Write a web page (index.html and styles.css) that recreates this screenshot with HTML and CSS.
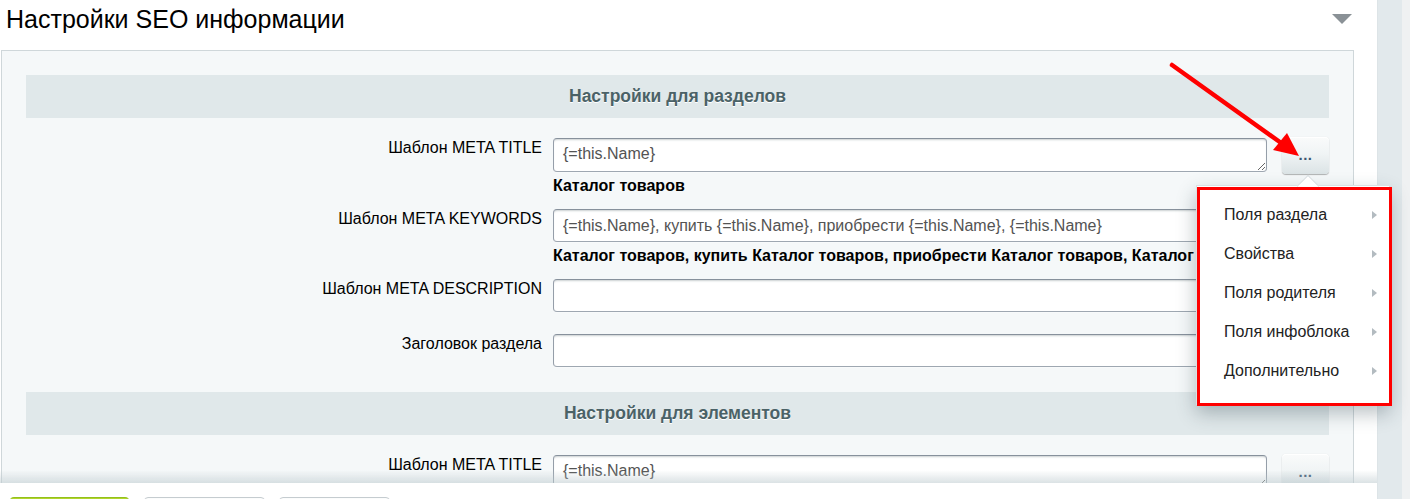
FILE: index.html
```html
<!DOCTYPE html>
<html lang="ru">
<head>
<meta charset="utf-8">
<title>Настройки SEO информации</title>
<link rel="stylesheet" href="styles.css">
</head>
<body>
<div class="layout">
  <div class="main">
    <div class="title-row">
      <h1 class="title">Настройки SEO информации</h1>
      <span class="toggle"></span>
    </div>
    <div class="panel">
      <div class="sec-head">Настройки для разделов</div>
      <div class="row row-first">
        <div class="lbl">Шаблон META TITLE</div>
        <div class="fld">
          <textarea class="inp inp-area">{=this.Name}</textarea>
          <div class="preview">Каталог товаров</div>
        </div>
        <button class="dots">...</button>
      </div>
      <div class="row">
        <div class="lbl">Шаблон META KEYWORDS</div>
        <div class="fld">
          <input class="inp" type="text" value="{=this.Name}, купить {=this.Name}, приобрести {=this.Name}, {=this.Name}">
          <div class="preview">Каталог товаров, купить Каталог товаров, приобрести Каталог товаров, Каталог товаров</div>
        </div>
        <button class="dots">...</button>
      </div>
      <div class="row">
        <div class="lbl">Шаблон META DESCRIPTION</div>
        <div class="fld">
          <input class="inp" type="text" value="">
        </div>
        <button class="dots">...</button>
      </div>
      <div class="row">
        <div class="lbl">Заголовок раздела</div>
        <div class="fld">
          <input class="inp" type="text" value="">
        </div>
        <button class="dots">...</button>
      </div>
      <div class="sec-head sec-head-2">Настройки для элементов</div>
      <div class="row row-first">
        <div class="lbl">Шаблон META TITLE</div>
        <div class="fld">
          <textarea class="inp inp-area">{=this.Name}</textarea>
          <div class="preview">Каталог товаров</div>
        </div>
        <button class="dots">...</button>
      </div>
    </div>
  </div>
  <div class="strip"></div>
  <div class="strip2"></div>
</div>

<div class="footer">
  <span class="fbtn fbtn-save"></span>
  <span class="fbtn fbtn-apply"></span>
  <span class="fbtn fbtn-cancel"></span>
</div>

<div class="menu">
  <span class="menu-tip"></span>
  <div class="menu-item"><span>Поля раздела</span><i class="arr"></i></div>
  <div class="menu-item"><span>Свойства</span><i class="arr"></i></div>
  <div class="menu-item"><span>Поля родителя</span><i class="arr"></i></div>
  <div class="menu-item"><span>Поля инфоблока</span><i class="arr"></i></div>
  <div class="menu-item"><span>Дополнительно</span><i class="arr"></i></div>
</div>
<div class="annot-box"></div>

<svg class="annot-arrow" width="1410" height="499" viewBox="0 0 1410 499">
  <line x1="1172" y1="65" x2="1284" y2="145" stroke="#ff0000" stroke-width="4.5" stroke-linecap="round"/>
  <polygon points="1299,156 1273,150 1287,133" fill="#ff0000"/>
</svg>
</body>
</html>
```
FILE: styles.css
```css
html, body {
  margin: 0;
  padding: 0;
  height: 100%;
  overflow: hidden;
}
body {
  font-family: "Liberation Sans", Arial, sans-serif;
  font-size: 16px;
  color: #000;
  background: #fff;
}
.layout {
  display: flex;
  height: 499px;
}
.main {
  width: 1377px;
  flex: none;
  background: #fff;
  overflow: hidden;
}
.strip {
  width: 25px;
  flex: none;
  background: #e2e9ec;
  border-left: 1px solid #dde4e7;
  box-sizing: border-box;
}
.strip2 {
  flex: 1;
  background: #eff1f2;
}
.title-row {
  display: flex;
  justify-content: space-between;
  align-items: flex-start;
  height: 50px;
}
.title {
  margin: 0;
  padding: 5px 0 0 6px;
  font-weight: normal;
  font-size: 25px;
  line-height: 28px;
  color: #000;
}
.toggle {
  width: 0;
  height: 0;
  margin: 14px 25px 0 0;
  border-left: 10px solid transparent;
  border-right: 10px solid transparent;
  border-top: 10px solid #8a9196;
}
.panel {
  margin-left: 1px;
  width: 1303px;
  padding: 24px 24px 40px 24px;
  border: 1px solid #cfd7da;
  background: #f5f8f9;
}
.sec-head {
  height: 43px;
  line-height: 43px;
  background: #e0e8ea;
  text-align: center;
  font-weight: bold;
  font-size: 17.5px;
  color: #4b6267;
  text-shadow: 0 1px #fff;
}
.sec-head-2 {
  margin-top: 22px;
}
.row {
  display: flex;
  align-items: flex-start;
  margin-top: 19px;
}
.row-first {
  margin-top: 20px;
}
.lbl {
  width: 516px;
  margin-right: 11px;
  text-align: right;
  font-size: 16px;
  line-height: 18px;
  padding-top: 1px;
  flex: none;
}
.fld {
  width: 714px;
  flex: none;
  min-width: 0;
}
.inp {
  display: block;
  box-sizing: border-box;
  width: 714px;
  height: 33px;
  margin: 0;
  padding: 0 9px;
  font-family: "Liberation Sans", Arial, sans-serif;
  font-size: 16px;
  line-height: 18px;
  color: #535353;
  background: #fff;
  border: 1px solid;
  border-color: #87919c #959ea9 #9ea7b1 #959ea9;
  border-radius: 4px;
  box-shadow: 0 1px 0 0 rgba(255,255,255,0.3), inset 0 2px 2px -1px rgba(180,188,191,0.7);
  outline: none;
}
.inp-area {
  height: 34px;
  padding-top: 6px;
  resize: both;
  overflow: hidden;
}
.preview {
  margin-top: 5px;
  margin-bottom: -5px;
  font-weight: bold;
  font-size: 16px;
  line-height: 18px;
  white-space: nowrap;
  overflow: visible;
}
.dots {
  flex: none;
  width: 47px;
  height: 37px;
  margin: -1px 0 0 15px;
  padding: 0 0 2px 0;
  border: none;
  border-radius: 4px;
  background: linear-gradient(to bottom, #fafbfb 0%, #f0f4f5 45%, #dbe3e5 100%);
  box-shadow: 0 0 1px rgba(0,0,0,.15), 0 1px 1px rgba(0,0,0,.28), inset 0 1px #fff;
  font-family: "Liberation Sans", Arial, sans-serif;
  font-weight: bold;
  font-size: 15px;
  color: #3d5670;
  letter-spacing: 0.5px;
}

/* fixed footer bar with buttons */
.footer {
  position: fixed;
  left: 0;
  bottom: 0;
  width: 1377px;
  height: 16px;
  background: #fff;
  display: flex;
  align-items: flex-start;
  padding: 14px 0 0 10px;
  box-sizing: border-box;
  overflow: visible;
}
.footer::before {
  content: "";
  position: absolute;
  left: 0;
  right: 0;
  top: -13px;
  height: 13px;
  background: linear-gradient(to bottom, rgba(200,212,216,0) 0%, rgba(190,203,207,0.55) 100%);
}
.fbtn {
  display: block;
  height: 30px;
  border-radius: 4px;
  box-sizing: border-box;
  flex: none;
}
.fbtn-save {
  width: 119px;
  background: linear-gradient(to bottom, #b2d42e, #94bb12);
  border-top: 1px solid #93c11b;
}
.fbtn-apply {
  width: 121px;
  margin-left: 15px;
  background: #fbfcfc;
  border: 1px solid #c5ccd0;
}
.fbtn-cancel {
  width: 111px;
  margin-left: 14px;
  background: #fbfcfc;
  border: 1px solid #c5ccd0;
}

/* popup menu */
.menu {
  position: absolute;
  left: 1196px;
  top: 185px;
  width: 194px;
  height: 220px;
  box-sizing: border-box;
  background: #fff;
  border: 1px solid #dae1e3;
  box-shadow: 0 8px 18px rgba(40,60,70,0.33);
  padding-top: 9px;
}
.menu-tip {
  position: absolute;
  left: 103px;
  top: -8px;
  width: 15px;
  height: 15px;
  background: #fff;
  border-top: 1px solid #d7dee0;
  border-left: 1px solid #d7dee0;
  transform: rotate(45deg);
}
.menu-item {
  position: relative;
  display: flex;
  justify-content: space-between;
  align-items: center;
  height: 39px;
  padding: 0 12px 0 27px;
  font-size: 16px;
  color: #222;
}
.arr {
  width: 0;
  height: 0;
  border-top: 4px solid transparent;
  border-bottom: 4px solid transparent;
  border-left: 5px solid #b3bbc0;
}
.annot-box {
  position: absolute;
  left: 1197px;
  top: 187px;
  width: 195px;
  height: 219px;
  box-sizing: border-box;
  border: 3px solid #ff0000;
  pointer-events: none;
}
.annot-arrow {
  position: absolute;
  left: 0;
  top: 0;
  pointer-events: none;
}
```
